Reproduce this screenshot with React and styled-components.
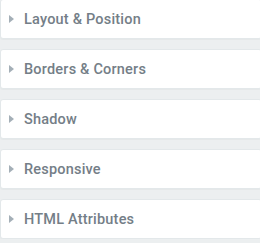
import React from 'react';
import styled, { createGlobalStyle } from 'styled-components';

const GlobalStyle = createGlobalStyle`
  html, body {
    margin: 0;
    padding: 0;
    background: #eceff0;
  }
  body {
    font-family: Roboto, "Liberation Sans", sans-serif;
  }
`;

const Panel = styled.div`
  display: flex;
  flex-direction: column;
  gap: 10px;
  margin-top: -1px;
  width: 262px;
  overflow: hidden;
`;

const Section = styled.div`
  display: flex;
  align-items: center;
  gap: 10px;
  height: 38px;
  padding-left: 8px;
  background: #fff;
  border: 1px solid #e3e8ea;
  border-radius: 3px;
  box-shadow: 0 1px 1px rgba(0, 0, 0, 0.03);
`;

const Caret = styled.span`
  width: 0;
  height: 0;
  border-top: 4px solid transparent;
  border-bottom: 4px solid transparent;
  border-left: 5px solid #a4afb7;
`;

const Title = styled.span`
  font-size: 14.5px;
  font-weight: 500;
  color: #747e87;
  letter-spacing: 0.2px;
`;

const sections = [
  'Layout & Position',
  'Borders & Corners',
  'Shadow',
  'Responsive',
  'HTML Attributes',
];

export default function App() {
  return (
    <>
      <GlobalStyle />
      <Panel>
        {sections.map((name) => (
          <Section key={name}>
            <Caret />
            <Title>{name}</Title>
          </Section>
        ))}
      </Panel>
    </>
  );
}
